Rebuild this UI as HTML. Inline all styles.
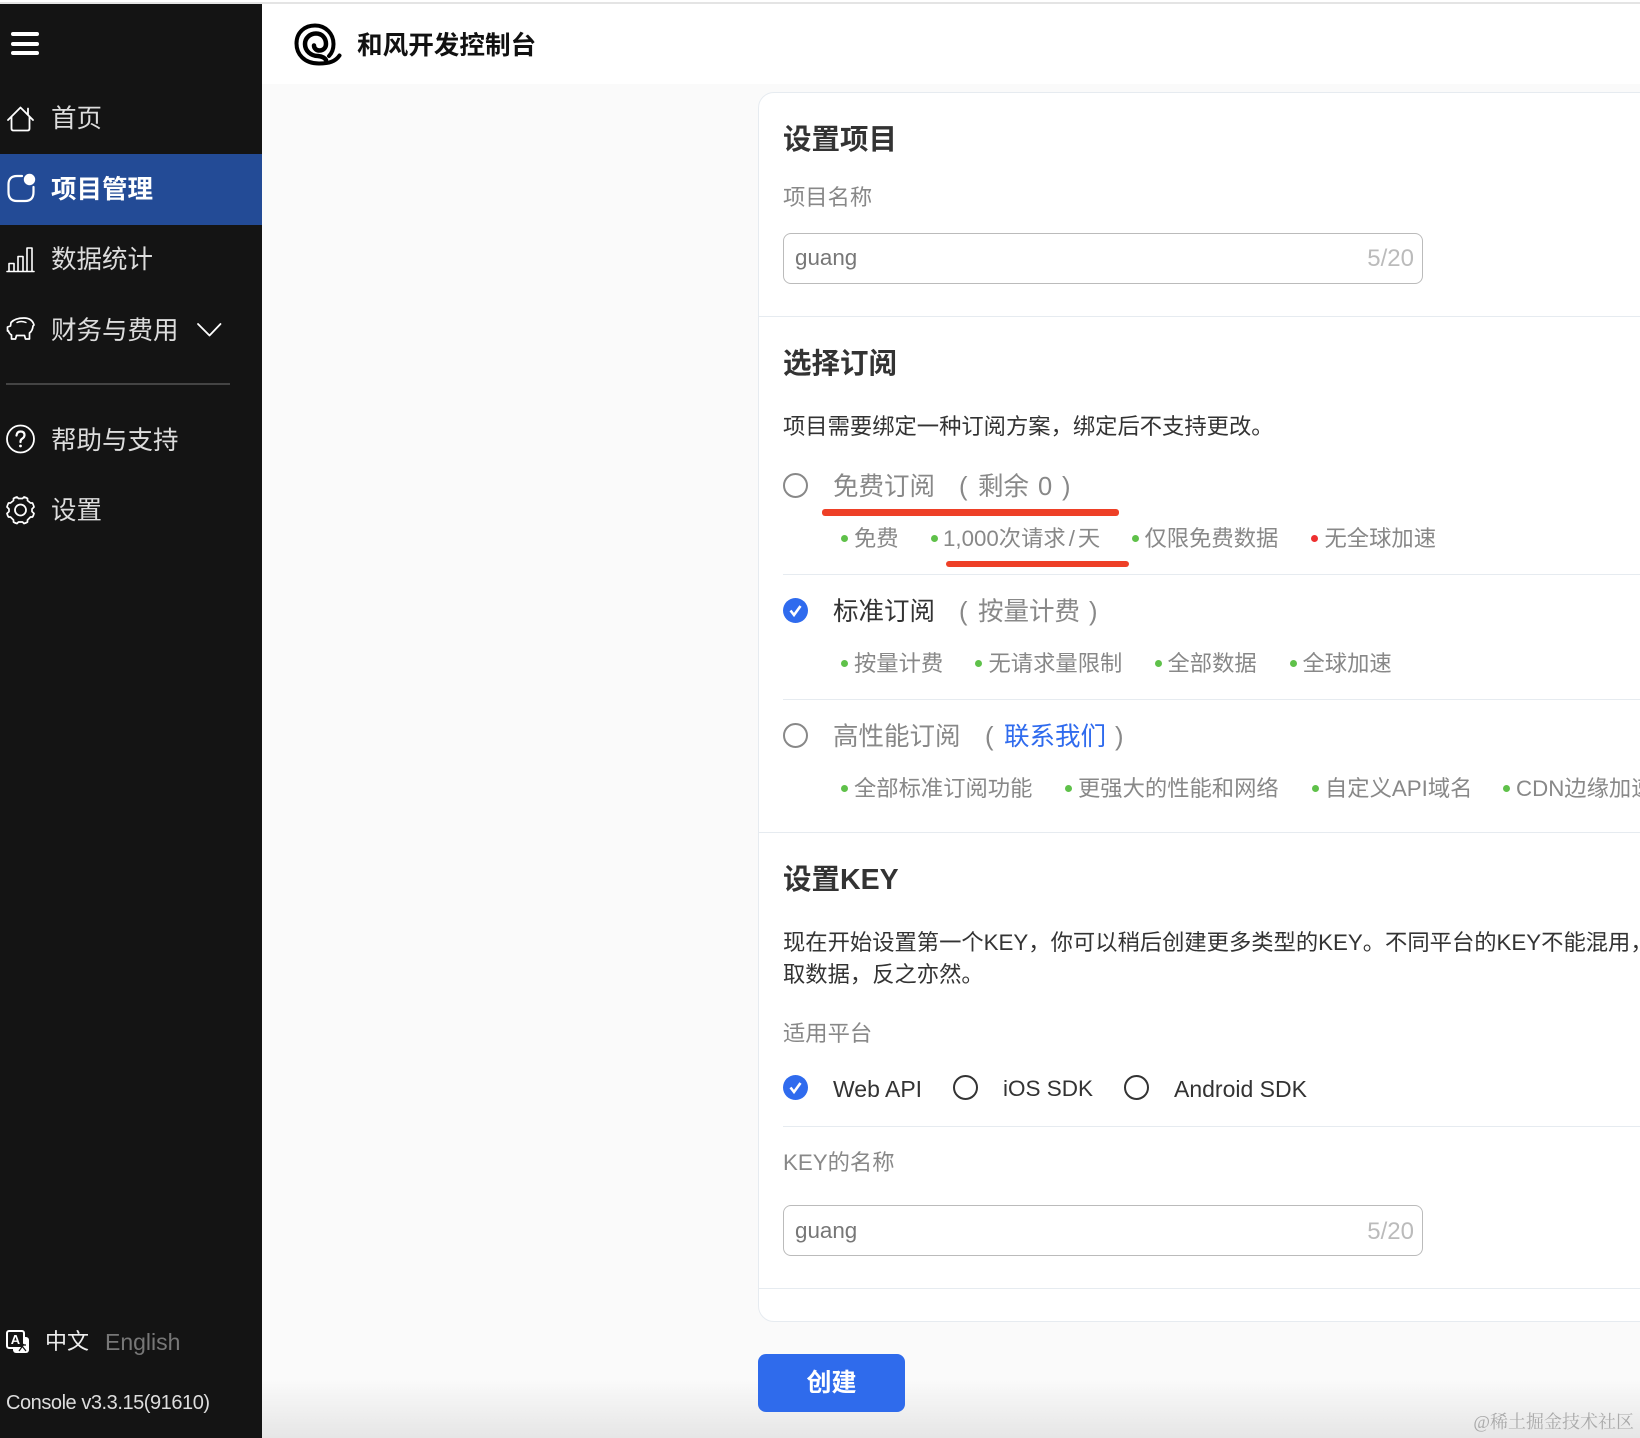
<!DOCTYPE html>
<html lang="zh-Hans"><head><meta charset="utf-8"><title>和风开发控制台</title>
<style>
html,body{margin:0;padding:0;width:1640px;height:1438px;overflow:hidden;background:#fafafa}
body{position:relative;font-family:"Liberation Sans","Noto Sans CJK SC",sans-serif;color:#333}
.a{position:absolute;white-space:nowrap}
.t{position:absolute;white-space:nowrap;height:40px;line-height:40px}
.nav{font-size:25.500px;color:#ddd;left:51px}
.h{font-size:28.500px;font-weight:700;color:#333;left:783px}
.l{font-size:22.300px;color:#888;left:783px}
.p{font-size:22.300px;color:#333;left:783px}
.f{font-size:22.300px;color:#888}
.o{font-size:25.500px;color:#888}
.d{position:absolute;width:7px;height:7px;border-radius:50%;background:#5fc14a}
.r{position:absolute;width:25px;height:25px;box-sizing:border-box;border:2px solid #888;border-radius:50%}
.r.k{border-color:#333}
.hr{position:absolute;height:1px;background:#e6ebf0;right:0}
.inp{position:absolute;left:783px;width:640px;height:51px;box-sizing:border-box;border:1px solid #bbb;border-radius:8px;background:#fff}
.red{position:absolute;background:#ee4027;border-radius:3px}
svg{position:absolute;overflow:visible}
</style></head><body>
<div class="a" style="left:0;top:0;width:1640px;height:2px;background:#fff"></div>
<div class="a" style="left:0;top:2px;width:1640px;height:2px;background:#e4e4e4"></div>
<div class="a" style="left:262px;top:4px;width:1378px;height:80px;background:#fff"></div>
<div class="a" style="left:0;top:4px;width:262px;height:1434px;background:#141414"></div>
<div class="a" style="left:0;top:154px;width:262px;height:71px;background:#234b96"></div>

<!-- hamburger -->
<div class="a" style="left:11px;top:31.500px;width:28px;height:4px;border-radius:2px;background:#fff"></div>
<div class="a" style="left:11px;top:41.500px;width:28px;height:4px;border-radius:2px;background:#fff"></div>
<div class="a" style="left:11px;top:51px;width:28px;height:4px;border-radius:2px;background:#fff"></div>

<!-- icons -->
<svg style="left:0;top:0" width="262" height="540" fill="none" stroke="#fff" stroke-width="1.8" stroke-linecap="round" stroke-linejoin="round">
<path d="M8 120L20.500 107.500L33 120M11.500 117V128.500Q11.500 130.500 13.500 130.500H27.500Q29.500 130.500 29.500 128.500V117M28 115V108.500"/>
<path d="M22 176H17Q8.500 176 8.500 184.500V192Q8.500 201 17 201H25Q33.500 201 33.500 192V187" stroke-width="2.200"/>
<circle cx="29.500" cy="179.500" r="5.700" fill="#fff" stroke="none"/>
<path d="M7 271.500H34M9 271V263.500H14V271M18 271V256.500H23V271M27 271V248H32V271" stroke-width="1.600"/>
<path d="M11 322.500Q15 318 24 318Q32 318 34 325L33 326Q32.500 331 29.500 333V339H25.500L24.500 335.500H16.500L15.500 339H11.500V335Q9 333.500 8.500 331H7.500V327L10.500 326Z" stroke-width="1.700"/>
<path d="M17 322.500Q21 320.500 26 322.500" stroke-width="1.400"/>
<path d="M198 324L209.500 335.500L220.500 324" stroke-width="1.800"/>
<circle cx="20.500" cy="439" r="13.500" stroke-width="1.800"/>
<path d="M16.500 435.500Q17 431.500 20.500 431.500Q24.500 431.500 24.500 435Q24.500 437 22.500 438.500Q20.500 439.500 20.500 442" stroke-width="2.200"/>
<circle cx="20.500" cy="446" r="1.400" fill="#fff" stroke="none"/>
<circle cx="20.500" cy="510" r="5.500" stroke-width="1.800"/>
<path d="M17 497L18.500 498.500H22.500L24 497Q26 497.500 27.500 498.500V500.500L30.500 503H32.500Q33.500 505 34 507L32 509V511.500L34 513.500Q33.500 515.500 32.500 517H30.500L27.500 520V522Q26 523 24 523.500L22.500 522H18.500L17 523.500Q15 523 13.500 522V520L10.500 517H8.500Q7.500 515.500 7 513.500L9 511.500V509L7 507Q7.500 505 8.500 503H10.500L13.500 500.500V498.500Q15 497.500 17 497Z" stroke-width="1.700"/>
</svg>

<!-- translate icon -->
<div class="a" style="left:13px;top:1337px;width:16px;height:16px;background:#fff;border-radius:3px"></div>
<div class="a" style="left:6px;top:1330px;width:15px;height:15px;background:#141414;border:2px solid #fff;border-radius:3px"></div>
<div class="a" style="left:8px;top:1332px;width:15px;height:15px;line-height:15px;font-size:13px;font-weight:700;color:#fff;text-align:center">A</div>
<svg style="left:0;top:0" width="40" height="1438" fill="none" stroke="#141414" stroke-width="1.200"><path d="M19 1351L24 1344M20 1345H26M22 1346L26 1351"/></svg>

<!-- nav text -->
<div class="t nav" style="top:99px">首页</div>
<div class="t nav" style="top:170px;color:#fff;font-weight:700">项目管理</div>
<div class="t nav" style="top:240px">数据统计</div>
<div class="t nav" style="top:311px">财务与费用</div>
<div class="a" style="left:6px;top:383px;width:224px;height:2px;background:#444"></div>
<div class="t nav" style="top:421px">帮助与支持</div>
<div class="t nav" style="top:491px">设置</div>
<div class="t" style="left:45px;top:1322px;font-size:22px;color:#eee">中文</div>
<div class="t" style="left:105px;top:1321.500px;font-size:23px;color:#777">English</div>
<div class="t" style="left:6px;top:1383px;font-size:20px;letter-spacing:-.45px;color:#ddd">Console v3.3.15(91610)</div>

<!-- logo -->
<svg style="left:0;top:0" width="400" height="90" fill="none" stroke="#000" stroke-linecap="round">
<path d="M339.500 55.500C335.500 61.500 329 63.500 319 63.500C304 63.500 296.500 54 296.500 43.500C296.500 32 305 25.500 315 25.500C326 25.500 333.500 34 333.500 44C333.500 49 332 53 329 56" stroke-width="4"/>
<path d="M326 60C325 58 322 56.500 318 56C311 56 305 51 305 44C305 38 310 33.500 316 33.500C322 33.500 326 38 326 44C326 48 323 50.500 319.500 50.500C316.500 50.500 314 48.500 314 45.500" stroke-width="4.500"/>
</svg>
<div class="t" style="left:357px;top:26px;font-size:25.600px;font-weight:700;color:#111">和风开发控制台</div>

<!-- card -->
<div class="a" style="left:758px;top:92px;width:920px;height:1230px;box-sizing:border-box;background:#fff;border:1px solid #e6ebf0;border-radius:16px"></div>
<div class="hr" style="left:759px;top:316px"></div>
<div class="hr" style="left:783px;top:574px"></div>
<div class="hr" style="left:783px;top:699px"></div>
<div class="hr" style="left:759px;top:832px"></div>
<div class="hr" style="left:783px;top:1126px"></div>
<div class="hr" style="left:759px;top:1288px"></div>

<div class="t h" style="top:120px">设置项目</div>
<div class="t l" style="top:178px">项目名称</div>
<div class="inp" style="top:233px"></div>
<div class="t" style="left:795px;top:238px;font-size:22.400px;color:#777">guang</div>
<div class="t" style="right:226px;top:238.500px;font-size:24px;color:#bbb">5/20</div>

<div class="t h" style="top:344px">选择订阅</div>
<div class="t p" style="top:407px">项目需要绑定一种订阅方案&#xFF0C;绑定后不支持更改。</div>

<div class="r" style="left:783px;top:473px"></div>
<div class="t o" style="left:833px;top:467px">免费订阅</div>
<div class="t o" style="left:959px;top:467px">(</div>
<div class="t o" style="left:978px;top:467px">剩余</div>
<div class="t o" style="left:1038px;top:467px">0</div>
<div class="t o" style="left:1062px;top:467px">)</div>
<div class="red" style="left:822px;top:509px;width:297px;height:7px"></div>
<div class="d" style="left:840.500px;top:534.500px"></div><div class="t f" style="left:854px;top:519px">免费</div>
<div class="d" style="left:930.500px;top:534.500px"></div><div class="t f" style="left:943px;top:519px">1,000次请求<span style="margin:0 3px">/</span>天</div>
<div class="d" style="left:1131.500px;top:534.500px"></div><div class="t f" style="left:1144.500px;top:519px">仅限免费数据</div>
<div class="d" style="left:1310.500px;top:534.500px;background:#ee3030"></div><div class="t f" style="left:1324.500px;top:519px">无全球加速</div>
<div class="red" style="left:946px;top:561px;width:183px;height:6px"></div>

<svg style="left:783px;top:598px" width="25" height="25"><circle cx="12.500" cy="12.500" r="12.500" fill="#2f6bee"/><path d="M7.500 12.500L11 17L17.500 8" fill="none" stroke="#fff" stroke-width="2.600"/></svg>
<div class="t o" style="left:833px;top:592px;color:#333">标准订阅</div>
<div class="t o" style="left:959px;top:592px">(</div>
<div class="t o" style="left:978px;top:592px">按量计费</div>
<div class="t o" style="left:1089px;top:592px">)</div>
<div class="d" style="left:840.500px;top:659.500px"></div><div class="t f" style="left:854px;top:644px">按量计费</div>
<div class="d" style="left:975px;top:659.500px"></div><div class="t f" style="left:988.500px;top:644px">无请求量限制</div>
<div class="d" style="left:1154.500px;top:659.500px"></div><div class="t f" style="left:1167.500px;top:644px">全部数据</div>
<div class="d" style="left:1289.500px;top:659.500px"></div><div class="t f" style="left:1302.500px;top:644px">全球加速</div>

<div class="r" style="left:783px;top:723px"></div>
<div class="t o" style="left:833px;top:717px">高性能订阅</div>
<div class="t o" style="left:985px;top:717px">(</div>
<div class="t o" style="left:1004px;top:717px;color:#2f6bee">联系我们</div>
<div class="t o" style="left:1115px;top:717px">)</div>
<div class="d" style="left:840.500px;top:784.500px"></div><div class="t f" style="left:854px;top:769px">全部标准订阅功能</div>
<div class="d" style="left:1064.500px;top:784.500px"></div><div class="t f" style="left:1078px;top:769px">更强大的性能和网络</div>
<div class="d" style="left:1311.500px;top:784.500px"></div><div class="t f" style="left:1325px;top:769px">自定义API域名</div>
<div class="d" style="left:1502.500px;top:784.500px"></div><div class="t f" style="left:1516px;top:769px">CDN边缘加速</div>

<div class="t h" style="top:860px">设置KEY</div>
<div class="t p" style="top:923px">现在开始设置第一个KEY&#xFF0C;你可以稍后创建更多类型的KEY。不同平台的KEY不能混用&#xFF0C;</div>
<div class="t p" style="top:955px">取数据&#xFF0C;反之亦然。</div>

<div class="t l" style="top:1014px">适用平台</div>
<svg style="left:783px;top:1075px" width="25" height="25"><circle cx="12.500" cy="12.500" r="12.500" fill="#2f6bee"/><path d="M7.500 12.500L11 17L17.500 8" fill="none" stroke="#fff" stroke-width="2.600"/></svg>
<div class="t p" style="left:833px;top:1069px;font-size:23px">Web API</div>
<div class="r k" style="left:953px;top:1075px"></div>
<div class="t p" style="left:1003px;top:1069px;font-size:22.500px">iOS SDK</div>
<div class="r k" style="left:1124px;top:1075px"></div>
<div class="t p" style="left:1174px;top:1069px;font-size:23px">Android SDK</div>

<div class="t l" style="top:1143px">KEY的名称</div>
<div class="inp" style="top:1205px"></div>
<div class="t" style="left:795px;top:1211px;font-size:22.400px;color:#777">guang</div>
<div class="t" style="right:226px;top:1211.500px;font-size:24px;color:#bbb">5/20</div>

<!-- bottom shade -->
<div class="a" style="left:262px;top:1380px;width:1378px;height:58px;background:linear-gradient(#fafafa,#e6e6e6)"></div>
<div class="a" style="left:758px;top:1354px;width:147px;height:58px;border-radius:8px;background:#2f6bec;color:#fff;font-size:25px;font-weight:700;line-height:58px;text-align:center">创建</div>
<div class="t" style="right:6px;top:1402px;font-size:18px;color:#aaa;font-family:'Liberation Serif','Noto Serif CJK SC',serif">@稀土掘金技术社区</div>
</body></html>
